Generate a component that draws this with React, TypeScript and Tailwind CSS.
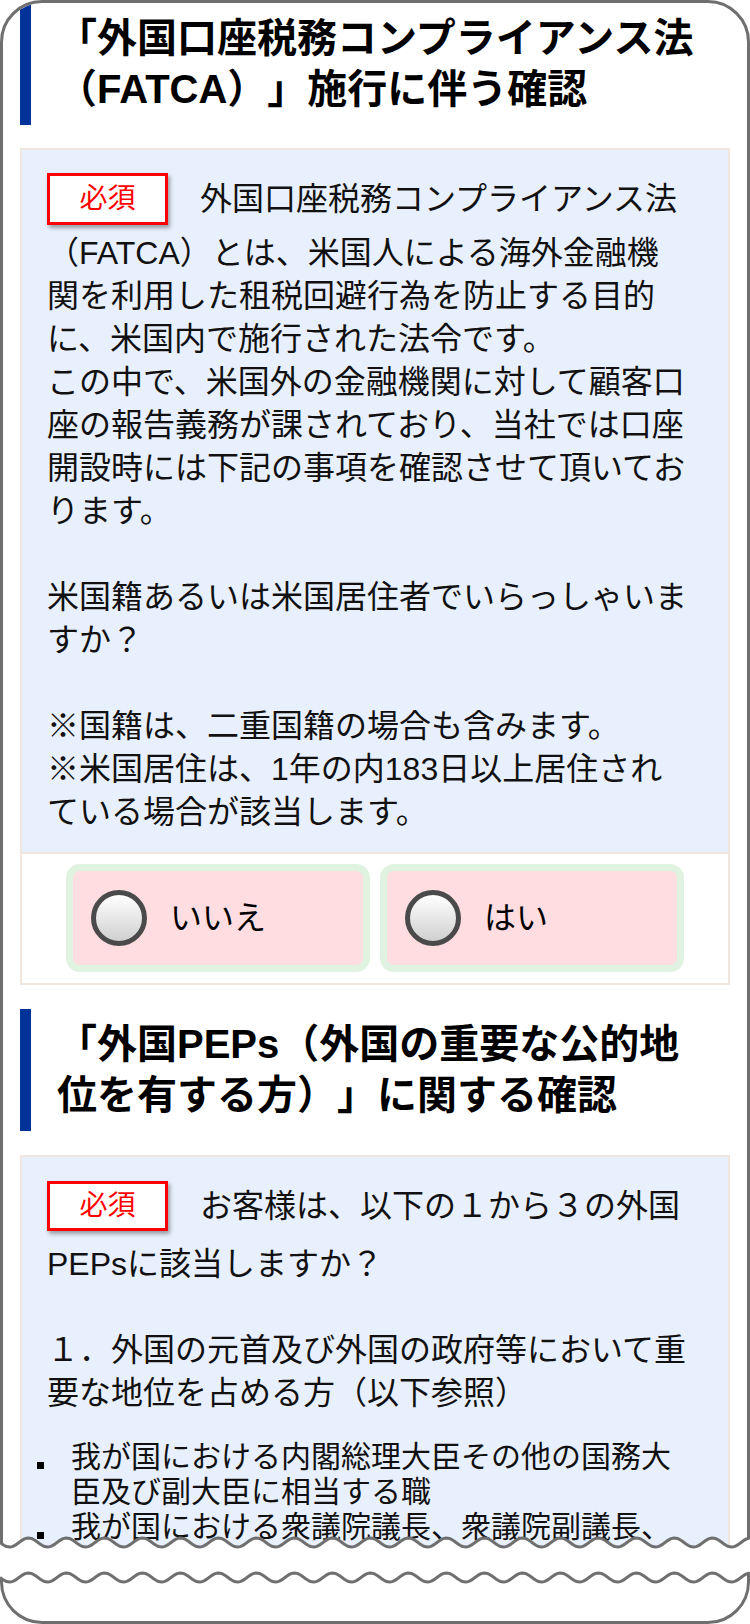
import React from 'react';

const W = 750;

// torn-paper edge drawn over the bottom of the screenshot frame
function wavePoints(cy: number, amp: number, period: number, phase: number) {
  const pts: string[] = [];
  for (let x = 0; x <= W; x += 2) {
    const y = cy + amp * Math.sin(((x + phase) / period) * Math.PI * 2);
    pts.push(`${x},${y.toFixed(2)}`);
  }
  return pts;
}

function TornEdge() {
  const top = wavePoints(12.5, 4.5, 38, 0);
  const bottom = wavePoints(47.5, 4.5, 38, 0);
  const band = [...top, ...[...bottom].reverse()].join(' ');
  return (
    <svg className="absolute left-0 top-[1530px]" width={750} height={60} viewBox="0 0 750 60">
      <polygon points={band} fill="#ffffff" />
      <polyline points={top.join(' ')} fill="none" stroke="#6f6f6f" strokeWidth={3} />
      <polyline points={bottom.join(' ')} fill="none" stroke="#6f6f6f" strokeWidth={3} />
    </svg>
  );
}

function SectionHeading({ children }: { children: React.ReactNode }) {
  return (
    <h2 className="ml-[17px] mr-[16px] border-l-[11px] border-[#003399] pl-[26px] pt-[10px] pb-[10px] text-[40px] leading-[51px] font-bold text-black">
      {children}
    </h2>
  );
}

function RequiredBadge({ className }: { className: string }) {
  return (
    <span
      className={`flex shrink-0 items-center justify-center w-[121px] border-[3px] border-[#ff0000] bg-white text-[28px] leading-none text-[#ff0000] shadow-[2px_3px_4px_rgba(0,0,0,0.35)] ${className}`}
    >
      必須
    </span>
  );
}

function RadioOption({ label }: { label: string }) {
  return (
    <label className="flex items-center w-[304px] h-[108px] rounded-[14px] border-[7px] border-[#e0f2e0] bg-[#ffdde0] pl-[18px]">
      <span className="w-[56px] h-[56px] shrink-0 rounded-full border-[5px] border-[#4a4a4a] bg-linear-to-b from-white to-[#d0d0d0]" />
      <span className="ml-[23px] text-[32px] leading-none text-black">{label}</span>
    </label>
  );
}

function BulletItem({ children }: { children: React.ReactNode }) {
  return (
    <li className="flex">
      <span className="mt-[23px] ml-[15px] w-[7px] h-[7px] shrink-0 bg-black" />
      <span className="ml-[27px]">{children}</span>
    </li>
  );
}

export default function App() {
  return (
    <div className="relative w-[750px] h-[1624px] bg-white font-['Liberation_Sans','Noto_Sans_CJK_JP',sans-serif] text-[#111] [text-spacing-trim:space-all]">
      <div className="h-full border-[3px] border-[#6f6f6f] rounded-[42px] overflow-hidden">
        <div className="h-[1545px] overflow-hidden">
          <SectionHeading>
            「外国口座税務コンプライアンス法<br />
            （FATCA）」施行に伴う確認
          </SectionHeading>

          <section className="mt-[23px] mx-[17px] border-2 border-[#efe7df]">
            <div className="bg-[#e9f0fd] pl-[25px] pr-[24px] pt-[23px] pb-[18.5px] border-b-2 border-[#efe7df]">
              <div className="flex items-center">
                <RequiredBadge className="h-[52px]" />
                <span className="ml-[32px] text-[32px] leading-[43px]">外国口座税務コンプライアンス法</span>
              </div>
              <p className="mt-[6.5px] text-[32px] leading-[43px] whitespace-nowrap">
                （FATCA）とは、米国人による海外金融機<br />
                関を利用した租税回避行為を防止する目的<br />
                に、米国内で施行された法令です。<br />
                この中で、米国外の金融機関に対して顧客口<br />
                座の報告義務が課されており、当社では口座<br />
                開設時には下記の事項を確認させて頂いてお<br />
                ります。<br />
                <br />
                米国籍あるいは米国居住者でいらっしゃいま<br />
                すか？<br />
                <br />
                ※国籍は、二重国籍の場合も含みます。<br />
                ※米国居住は、1年の内183日以上居住され<br />
                ている場合が該当します。
              </p>
            </div>
            <div className="flex justify-center gap-[10px] bg-white pt-[10px] pb-[11px]">
              <RadioOption label="いいえ" />
              <RadioOption label="はい" />
            </div>
          </section>

          <div className="mt-[24px]">
            <SectionHeading>
              「外国PEPs（外国の重要な公的地<br />
              位を有する方）」に関する確認
            </SectionHeading>
          </div>

          <section className="mt-[24px] mx-[17px] border-2 border-[#efe7df] bg-[#e9f0fd] pl-[25px] pr-[24px] pt-[24px] pb-[40px]">
            <div className="flex items-center">
              <RequiredBadge className="h-[50px]" />
              <span className="ml-[32px] text-[32px] leading-[43px]">お客様は、以下の１から３の外国</span>
            </div>
            <p className="mt-[11.5px] text-[32px] leading-[43px] whitespace-nowrap">
              PEPsに該当しますか？<br />
              <br />
              １．外国の元首及び外国の政府等において重<br />
              要な地位を占める方（以下参照）
            </p>
            <ul className="mt-[24px] -ml-[25px] text-[30px] leading-[35px] whitespace-nowrap">
              <BulletItem>
                我が国における内閣総理大臣その他の国務大<br />
                臣及び副大臣に相当する職
              </BulletItem>
              <BulletItem>
                我が国における衆議院議長、衆議院副議長、<br />
                参議院議長又は参議院副議長に相当する職
              </BulletItem>
            </ul>
          </section>
        </div>
      </div>
      <TornEdge />
    </div>
  );
}
